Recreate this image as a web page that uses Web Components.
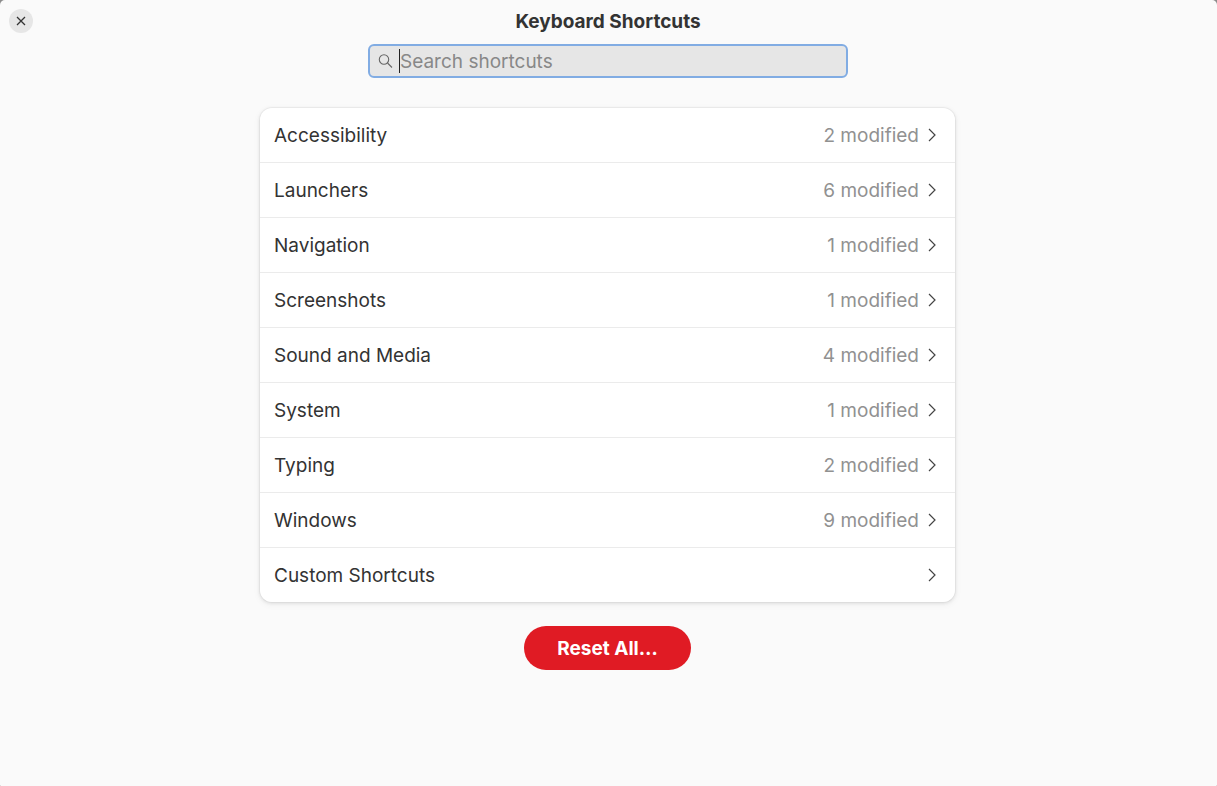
<!DOCTYPE html>
<html lang="en">
<head>
<meta charset="utf-8">
<meta name="viewport" content="width=device-width, initial-scale=1">
<title>Keyboard Shortcuts</title>
<style>
html { background: #8c8c8c; }
body { margin: 0; font: 19px/24px Inter, "Noto Sans", sans-serif; color: #333; }
</style>
</head>
<body>
<shortcuts-window heading="Keyboard Shortcuts">
  <shortcut-search slot="search"></shortcut-search>
  <shortcut-list>
    <shortcut-row count="2 modified">Accessibility</shortcut-row>
    <shortcut-row count="6 modified">Launchers</shortcut-row>
    <shortcut-row count="1 modified">Navigation</shortcut-row>
    <shortcut-row count="1 modified">Screenshots</shortcut-row>
    <shortcut-row count="4 modified">Sound and Media</shortcut-row>
    <shortcut-row count="1 modified">System</shortcut-row>
    <shortcut-row count="2 modified">Typing</shortcut-row>
    <shortcut-row count="9 modified">Windows</shortcut-row>
    <shortcut-row>Custom Shortcuts</shortcut-row>
  </shortcut-list>
  <pill-button>Reset All…</pill-button>
</shortcuts-window>
<script>
function define(name, markup, setup) {
  const template = document.createElement('template');
  template.innerHTML = markup;
  customElements.define(name, class extends HTMLElement {
    constructor() {
      super();
      this.attachShadow({ mode: 'open' }).append(template.content.cloneNode(true));
    }
    connectedCallback() { if (setup) setup(this, this.shadowRoot); }
  });
}

define('shortcuts-window', `
<style>
:host { display: flex; flex-direction: column; min-height: 100vh; box-sizing: border-box; background: #fafafa; border-radius: 5px 5px 1px 1px; }
header { display: grid; grid-template-columns: 24px 1fr 24px; align-items: start; padding: 9px 10px 0 9px; }
h1 { margin: 0; padding-top: 1px; font-size: inherit; line-height: 24px; font-weight: 700; text-align: center; }
.close { width: 24px; height: 24px; padding: 0; border: 0; border-radius: 50%; background: #e6e6e6; color: #333; display: grid; place-items: center; }
.search { display: flex; justify-content: center; padding: 10px 1px 0 0; }
main { display: flex; flex-direction: column; align-items: center; gap: 24px; padding: 30px 2px 24px 0; }
</style>
<header>
  <button class="close" type="button" aria-label="Close"><svg width="12" height="12" viewBox="0 0 12 12" aria-hidden="true"><path d="M2 2l8 8M10 2l-8 8" fill="none" stroke="currentColor" stroke-width="1.25"/></svg></button>
  <h1></h1>
</header>
<div class="search"><slot name="search"></slot></div>
<main><slot></slot></main>`,
(el, root) => { root.querySelector('h1').textContent = el.getAttribute('heading'); });

define('shortcut-search', `
<style>
:host { display: block; width: 100%; max-width: 480px; }
label { display: flex; align-items: center; height: 34px; box-sizing: border-box; border: 2px solid #81ace3; border-radius: 6px; background: #e6e6e6; padding: 0 8px; }
svg { flex: none; color: #666; margin-right: 5px; }
.caret { flex: none; width: 1px; height: 24px; background: #222; }
input { flex: 1; min-width: 0; height: 26px; padding: 1px 0 0; box-sizing: border-box; border: 0; outline: 0; background: none; font: inherit; color: #333; caret-color: transparent; }
input::placeholder { color: #888; opacity: 1; }
</style>
<label>
  <svg width="16" height="16" viewBox="0 0 16 16" aria-hidden="true"><g fill="none" stroke="currentColor" stroke-width="1.1"><circle cx="6" cy="6.5" r="4.7"/><path d="M9.5 10l4.5 4.5"/></g></svg>
  <span class="caret"></span>
  <input type="text" placeholder="Search shortcuts" aria-label="Search shortcuts">
</label>`);

define('shortcut-list', `
<style>
:host { display: flex; flex-direction: column; gap: 1px; width: 100%; max-width: 695px; overflow: hidden; border-radius: 12px; background: #ebebeb; box-shadow: 0 0 0 1px rgba(0,0,0,.03), 0 1px 3px 1px rgba(0,0,0,.07), 0 2px 6px 2px rgba(0,0,0,.03); }
</style><slot></slot>`);

define('shortcut-row', `
<style>
:host { display: block; }
button { display: flex; align-items: center; width: 100%; height: 54px; padding: 0 15px 0 14px; border: 0; background: #fff; font: inherit; color: inherit; text-align: left; }
.label { flex: 1; }
.label, .count { padding-top: 2px; }
.count { color: #919191; }
svg { flex: none; margin-left: 5px; color: #444; }
</style>
<button type="button"><span class="label"><slot></slot></span><span class="count"></span><svg width="16" height="16" viewBox="0 0 16 16" aria-hidden="true"><path d="M5 2l6 6-6 6" fill="none" stroke="currentColor" stroke-width="1.2"/></svg></button>`,
(el, root) => { root.querySelector('.count').textContent = el.getAttribute('count') || ''; });

define('pill-button', `
<style>
:host { display: block; }
button { height: 44px; padding: 2px 33px 0; border: 0; border-radius: 22px; background: #e01b24; color: #fff; font: inherit; font-weight: 700; }
</style>
<button type="button"><slot></slot></button>`);
</script>
</body>
</html>
